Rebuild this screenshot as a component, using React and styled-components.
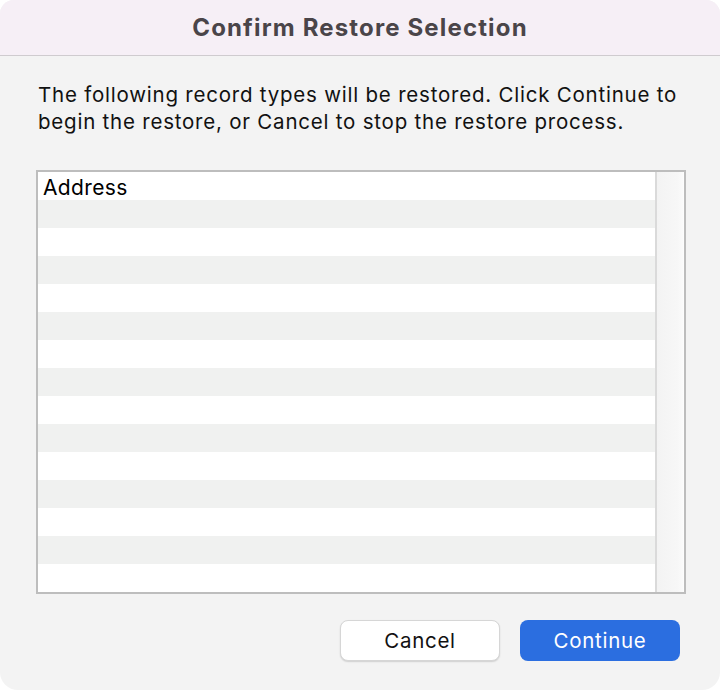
import React from 'react'
import styled, { createGlobalStyle } from 'styled-components'

const GlobalStyle = createGlobalStyle`
  html, body {
    margin: 0;
    padding: 0;
    background: #ffffff;
  }
  body {
    font-family: Inter, "Liberation Sans", sans-serif;
    -webkit-font-smoothing: antialiased;
  }
`

const ScDialog = styled.div`
  width: 720px;
  height: 690px;
  display: flex;
  flex-direction: column;
  background: #f3f3f3;
  border-radius: 14px 14px 18px 18px;
  overflow: hidden;
`

const ScTitleBar = styled.div`
  height: 55px;
  flex: none;
  display: flex;
  align-items: center;
  justify-content: center;
  background: #f6eff6;
  border-bottom: 1px solid #cfcbcf;
  color: #4a4549;
  font-size: 24px;
  font-weight: 700;
  letter-spacing: 1.15px;
`

const ScBody = styled.div`
  flex: 1;
  display: flex;
  flex-direction: column;
  padding: 26px 34px 29px 36px;
`

const ScMessage = styled.p`
  margin: 0 0 0 2px;
  font-size: 20.5px;
  line-height: 26.5px;
  letter-spacing: 0.78px;
  color: #111111;
  white-space: nowrap;
`

const ScListBox = styled.div`
  margin-top: 35px;
  height: 420px;
  display: flex;
  border: 2px solid #bdbdbd;
  background: #ffffff;
`

const ScRows = styled.div`
  flex: 1;
  display: flex;
  flex-direction: column;
`

const ScRow = styled.div`
  height: 28px;
  flex: none;
  padding: 2px 5px 0;
  box-sizing: border-box;
  display: flex;
  align-items: center;
  font-size: 21px;
  letter-spacing: 0.35px;
  color: #000000;
  background: ${p => (p.striped ? '#f0f1f0' : '#ffffff')};
`

const ScScrollTrack = styled.div`
  width: 26px;
  flex: none;
  background: linear-gradient(to right, #f3f3f3, #f7f7f7 80%, #fbfbfb);
  border-left: 2px solid #dadada;
  border-right: 1px solid #fdfdfd;
`

const ScFooter = styled.div`
  margin-top: auto;
  display: flex;
  justify-content: flex-end;
  gap: 20px;
  padding-right: 6px;
`

const ScButton = styled.button`
  width: 160px;
  height: 41px;
  padding: 0;
  border-radius: 8px;
  font-family: inherit;
  font-size: 20.5px;
  letter-spacing: 0.7px;
  cursor: pointer;
  border: ${p => (p.primary ? 'none' : '1px solid #d6d6d6')};
  background: ${p => (p.primary ? '#2b6ee0' : '#ffffff')};
  color: ${p => (p.primary ? '#ffffff' : '#111111')};
  box-shadow: ${p =>
    p.primary ? 'none' : '0 1px 1.5px rgba(0, 0, 0, 0.15)'};
`

const rows = ['Address', ...Array(14).fill('')]

export default function App() {
  return (
    <>
      <GlobalStyle />
      <ScDialog>
        <ScTitleBar>Confirm Restore Selection</ScTitleBar>
        <ScBody>
          <ScMessage>
            The following record types will be restored. Click Continue to
            <br />
            begin the restore, or Cancel to stop the restore process.
          </ScMessage>
          <ScListBox>
            <ScRows>
              {rows.map((label, i) => (
                <ScRow key={i} striped={i % 2 === 1}>
                  {label}
                </ScRow>
              ))}
            </ScRows>
            <ScScrollTrack />
          </ScListBox>
          <ScFooter>
            <ScButton>Cancel</ScButton>
            <ScButton primary>Continue</ScButton>
          </ScFooter>
        </ScBody>
      </ScDialog>
    </>
  )
}
